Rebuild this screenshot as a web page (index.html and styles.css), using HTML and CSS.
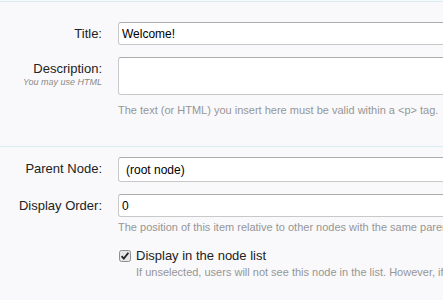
FILE: index.html
```html
<!DOCTYPE html>
<html lang="en">
<head>
    <meta charset="UTF-8">
    <title>Edit Node</title>
    <link rel="stylesheet" href="styles.css">
</head>
<body>
    <form class="node-form">
        <!-- basic info -->
        <fieldset class="section first">
            <div class="row">
                <label class="label" for="title">Title:</label>
                <div class="control">
                    <input type="text" id="title" class="text-input" value="Welcome!">
                </div>
            </div>
            <div class="row desc-row">
                <div class="label">
                    <label for="description" class="label-main">Description:</label>
                    <span class="label-hint">You may use HTML</span>
                </div>
                <div class="control">
                    <textarea id="description" class="text-area"></textarea>
                    <p class="help">The text (or HTML) you insert here must be valid within a &lt;p&gt; tag.</p>
                </div>
            </div>
        </fieldset>

        <!-- position -->
        <fieldset class="section">
            <div class="row">
                <label class="label" for="parent">Parent Node:</label>
                <div class="control">
                    <select id="parent" class="select-input">
                        <option>(root node)</option>
                    </select>
                </div>
            </div>
            <div class="row order-row">
                <label class="label" for="order">Display Order:</label>
                <div class="control">
                    <input type="text" id="order" class="text-input" value="0">
                    <p class="help order-help">The position of this item relative to other nodes with the same parent.</p>
                </div>
            </div>
            <div class="row check-row">
                <div class="label"></div>
                <div class="control">
                    <label class="check">
                        <svg class="check-box" width="12" height="12" viewBox="0 0 12 12">
                            <rect x="0.5" y="0.5" width="11" height="11" rx="2" fill="#e6e6e6" stroke="#8f8f8f"/>
                            <path d="M2.6 6.2 L4.8 8.6 L9.4 2.8" fill="none" stroke="#222" stroke-width="1.8"/>
                        </svg>
                        <span>Display in the node list</span>
                    </label>
                    <p class="help check-help">If unselected, users will not see this node in the list. However, if they know the URL they may still be able to access it.</p>
                </div>
            </div>
        </fieldset>
    </form>
</body>
</html>
```

FILE: styles.css
```css
html, body {
    overflow: hidden;
}
body {
    margin: 0;
    background-color: #f9f9fb;
    font-family: "Liberation Sans", Arial, sans-serif;
    color: #222;
}
.node-form {
    width: 900px;
    border-top: 1px solid #d7edf3;
    margin-top: 1px;
}
.section {
    margin: 0;
    padding: 10px 0 0 0;
    border: none;
    border-top: 1px solid #d7edf3;
}
.section.first {
    border-top: none;
    padding: 20px 0 29px 0;
}
.row {
    display: flex;
    gap: 16px;
}
.label {
    width: 102px;
    flex: none;
    text-align: right;
    font-size: 13px;
    line-height: 23px;
    color: #222;
}
.control {
    flex: 1;
}
.text-input, .text-area, .select-input {
    box-sizing: border-box;
    width: 600px;
    height: 23px;
    margin: 0;
    padding: 0 3px;
    font-family: "Liberation Sans", Arial, sans-serif;
    font-size: 12px;
    color: #000;
    background-color: white;
    border: 1px solid #c8c8c8;
    border-top-color: #acacac;
    border-radius: 3px;
    outline: none;
}
.desc-row {
    margin-top: 12px;
}
.desc-row .label {
    line-height: 16px;
    padding-top: 4px;
}
.label-main {
    display: block;
}
.label-hint {
    display: block;
    font-size: 9px;
    line-height: 11px;
    font-style: italic;
    color: #8a8a8a;
}
.text-area {
    display: block;
    height: 38px;
    resize: none;
}
.help {
    margin: 8px 0 0 0;
    font-size: 11px;
    line-height: 14px;
    color: #969696;
    white-space: nowrap;
}
.select-input {
    display: block;
    height: 25px;
    padding-left: 7px;
    appearance: none;
}
.order-row {
    margin-top: 12px;
}
.order-help {
    margin-top: 3px;
}
.check-row {
    margin-top: 14px;
}
.check-row .label {
    line-height: 16px;
}
.check {
    display: flex;
    align-items: center;
    gap: 5px;
    margin-left: 1px;
    font-size: 13px;
    line-height: 16px;
    color: #222;
}
.check-box {
    flex: none;
    margin-top: -1px;
}
.check-help {
    margin: 1px 0 0 18px;
}
```
